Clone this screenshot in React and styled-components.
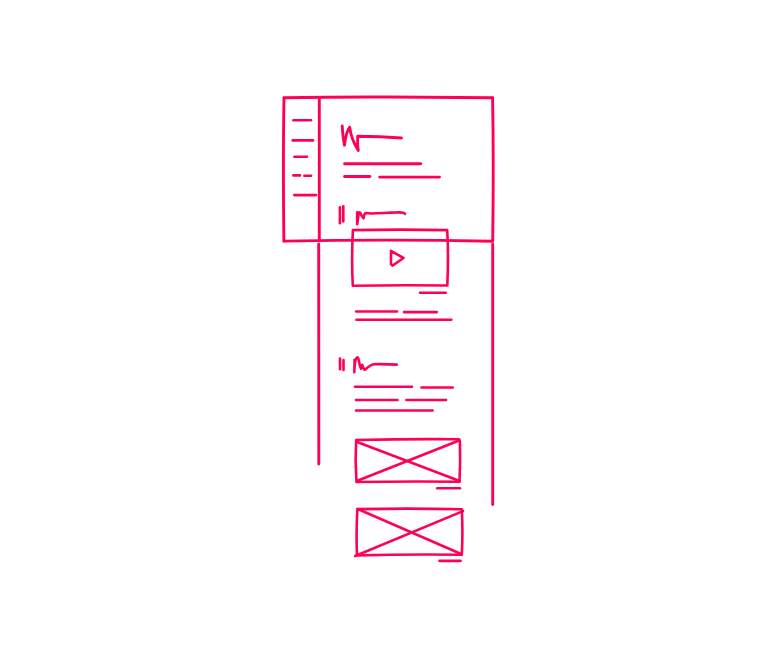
import React from "react";
import styled, { createGlobalStyle } from "styled-components";

const GlobalStyle = createGlobalStyle`
  html, body { margin: 0; background: #fff; }
  body { overflow: hidden; }
`;

const Page = styled.main`
  box-sizing: border-box;
  width: 773px;
  height: 663px;
  padding: 97px 0 0 284px;
  background: #fff;
`;

const Wireframe = styled.section`
  position: relative;
  display: grid;
  grid-template-columns: 35px 174px;
  width: 209px;
  height: 467px;
`;

const Drawing = styled.svg`
  display: block;
  flex: none;
  overflow: visible;
  fill: none;
  stroke: #ff0059;
  stroke-width: ${(p) => p.$weight || 2.6};
  stroke-linecap: round;
  stroke-linejoin: round;
`;

const Outline = styled(Drawing)`
  position: absolute;
  inset: 0;
  pointer-events: none;
`;

const Sidebar = styled.nav`
  display: flex;
  flex-direction: column;
  height: 144px;
  padding: 18px 0 0 6px;
  box-sizing: border-box;
`;

const Article = styled.article`
  display: flex;
  flex-direction: column;
  padding-left: 16px;
`;

const Block = styled.div`
  margin-top: ${(p) => p.$gap || 0}px;
`;

// Each drawing keeps its strokes in board coordinates; the box says which part it shows.
function Strokes({ top, height, left = 335, width = 134, weight, paths }) {
  return (
    <Drawing
      width={width}
      height={height}
      viewBox={`${left} ${top} ${width} ${height}`}
      $weight={weight}
      aria-hidden="true"
    >
      {paths.map((d) => (
        <path key={d} d={d} />
      ))}
    </Drawing>
  );
}

const outline = [
  "M284 97.7Q336 96.8 388 97T492.6 97.8",
  "M284 98Q282.9 160 283.9 241",
  "M284 241.1Q336 240.1 388 240.1T492.5 241.2",
  "M492.6 98Q493.8 165 492.7 241",
  "M319.3 98V240",
  "M318.7 244Q318.4 350 318.8 464",
  "M492.7 244V504.5",
];

const menu = [
  { top: 115, height: 15, paths: ["M293.4 120.3H311"] },
  { top: 130, height: 20, paths: ["M292.7 140.4H313"] },
  { top: 150, height: 15, paths: ["M294.3 156.8H307"] },
  { top: 165, height: 20, paths: ["M293.4 175.4H300", "M304.3 175.8H311"] },
  { top: 185, height: 20, paths: ["M294.3 195.1H316"] },
];

const article = [
  {
    gap: 24,
    top: 121,
    height: 35,
    weight: 2.9,
    paths: [
      "M342.2 126Q342.6 136 344.5 145.2Q346 132 349.7 127.2Q351 139 358.3 150.6Q357.3 145 357.7 136.3Q380 136.6 401.5 138",
    ],
  },
  {
    top: 156,
    height: 28,
    weight: 2.9,
    paths: ["M344.6 163.8H420.7", "M344.6 176.5H369.8", "M379.7 177.1H439.5"],
  },
  {
    gap: 20,
    top: 204,
    height: 24,
    paths: [
      "M339.9 207.3V223.2",
      "M343.3 206.3V221.5",
      "M357.2 212.2V224.2L358.6 214Q359.6 210 361.5 215.5L363.5 218.3Q364 213.8 365.6 213.1C373 214.6 385 212.4 397 212.4Q404 212.2 405 213.9",
    ],
  },
  {
    top: 228,
    height: 70,
    paths: [
      "M352.9 230.1Q400 229.2 447.2 230.1Q448.7 254 447.3 285.5Q400 284.8 352.8 285.7Q351.4 260 352.9 230.1",
      "M391 250.8V264.2L392.4 265.7L403.5 258Z",
      "M420 292.8H445.7",
    ],
  },
  {
    gap: 8,
    top: 306,
    height: 19,
    paths: ["M356.2 311.5H397", "M404 312.1H436.8", "M356.5 319.8H451.3"],
  },
  {
    gap: 30,
    top: 355,
    height: 22,
    paths: [
      "M340 358.5V369.3",
      "M343.5 360V370",
      "M354.6 359.8L354.3 372.3Q354.8 358.5 357.2 357.4C359.3 357 359 367 361.2 368.7L362.1 364.7C362.7 366.7 364.2 370.5 365.2 369.5Q371 364.2 374.5 364.2Q385 364 396.7 364.6",
    ],
  },
  {
    gap: 6,
    top: 383,
    height: 31,
    paths: [
      "M355 386.7H412",
      "M421.5 387.5H452.7",
      "M356 400H397.5",
      "M406.4 400H446",
      "M356 410.5H432.6",
    ],
  },
  {
    gap: 22,
    top: 436,
    height: 56,
    paths: [
      "M356.5 440Q407 438.8 457.5 439.2Q460 438.8 459.9 442Q460.6 463 459.5 481.7Q407 481.1 356.5 482Q354.9 461 356.2 440",
      "M356.5 441.8L459.6 481",
      "M356.8 481L458.5 440.7",
      "M437.2 488.2H460",
    ],
  },
  {
    gap: 14,
    top: 506,
    height: 58,
    paths: [
      "M357.4 509.1Q410 508.1 461.8 509.2Q463 531 461.8 554.8Q410 554.1 357 555.4Q356 532 357.4 509.1",
      "M357.8 509L461.7 554.2",
      "M355.2 556L463 511.1",
      "M439.5 560.9H460.5",
    ],
  },
];

export default function App() {
  return (
    <>
      <GlobalStyle />
      <Page>
        <Wireframe>
          <Outline
            width="209"
            height="467"
            viewBox="284 97 209 467"
            $weight={2.9}
            aria-hidden="true"
          >
            {outline.map((d) => (
              <path key={d} d={d} />
            ))}
          </Outline>
          <Sidebar>
            {menu.map((item) => (
              <Strokes key={item.top} left={290} width={28} {...item} />
            ))}
          </Sidebar>
          <Article>
            {article.map(({ gap, ...part }) => (
              <Block key={part.top} $gap={gap}>
                <Strokes {...part} />
              </Block>
            ))}
          </Article>
        </Wireframe>
      </Page>
    </>
  );
}
